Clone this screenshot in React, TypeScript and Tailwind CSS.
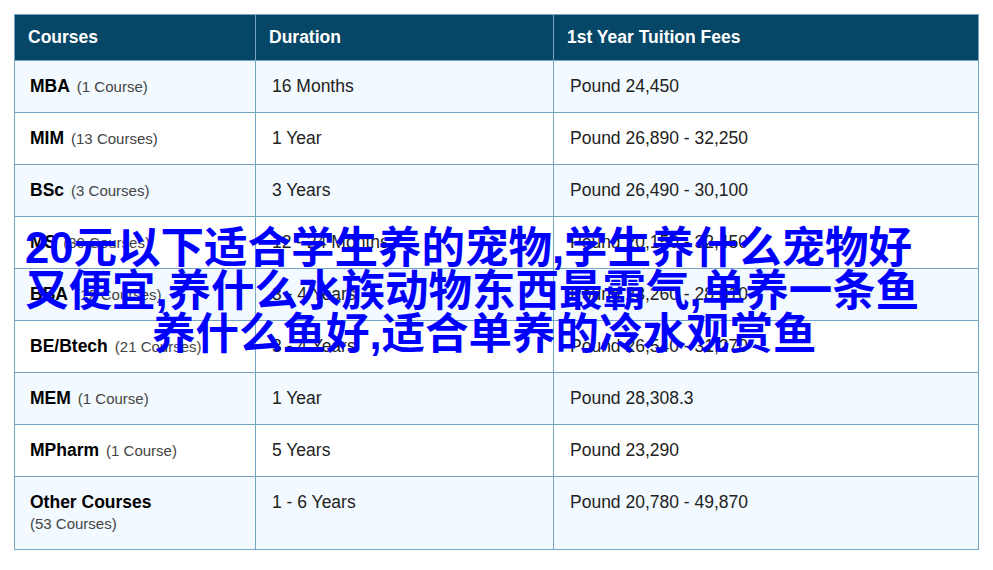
import React from 'react';

type Row = {
  name: string;
  count: string;
  duration: string;
  fees: string;
  stacked?: boolean;
};

const rows: Row[] = [
  { name: 'MBA', count: '(1 Course)', duration: '16 Months', fees: 'Pound 24,450' },
  { name: 'MIM', count: '(13 Courses)', duration: '1 Year', fees: 'Pound 26,890 - 32,250' },
  { name: 'BSc', count: '(3 Courses)', duration: '3 Years', fees: 'Pound 26,490 - 30,100' },
  { name: 'MS', count: '(30 Courses)', duration: '12 - 24 Months', fees: 'Pound 20,150 - 32,450' },
  { name: 'BBA', count: '(12 Courses)', duration: '3 - 4 Years', fees: 'Pound 23,260 - 28,810' },
  { name: 'BE/Btech', count: '(21 Courses)', duration: '3 - 4 Years', fees: 'Pound 26,540 - 31,270' },
  { name: 'MEM', count: '(1 Course)', duration: '1 Year', fees: 'Pound 28,308.3' },
  { name: 'MPharm', count: '(1 Course)', duration: '5 Years', fees: 'Pound 23,290' },
  { name: 'Other Courses', count: '(53 Courses)', duration: '1 - 6 Years', fees: 'Pound 20,780 - 49,870', stacked: true },
];

const App: React.FC = () => {
  return (
    <div className="relative h-[570px] w-[993px] overflow-hidden bg-white font-['Liberation_Sans',Arial,sans-serif]">
      <div className="pl-[14px] pt-[14px]">
        <table className="w-[965px] table-fixed border-collapse text-[17.5px] leading-[26px] text-[#222]">
          <thead>
            <tr className="h-[46px] bg-[#064666] text-left font-bold text-white">
              <th className="w-[241px] border border-[#73a5c0] pb-[2px] pl-[13px]">Courses</th>
              <th className="w-[298px] border border-[#73a5c0] pb-[2px] pl-[13px]">Duration</th>
              <th className="border border-[#73a5c0] pb-[2px] pl-[13px]">1st Year Tuition Fees</th>
            </tr>
          </thead>
          <tbody>
            {rows.map((row, i) => (
              <tr key={row.name} className={i % 2 === 0 ? 'bg-[#f2f9ff]' : 'bg-white'}>
                <td className={`border border-[#73a5c0] pl-[15px] pt-[12px] align-top ${row.stacked ? 'h-[73px]' : 'h-[52px]'}`}>
                  <b className="font-bold text-black">{row.name}</b>
                  {row.stacked ? (
                    <span className="block text-[15px] leading-[18px] text-[#444]">{row.count}</span>
                  ) : (
                    <span className="ml-[7px] text-[15px] text-[#444]">{row.count}</span>
                  )}
                </td>
                <td className="border border-[#73a5c0] pl-[16px] pt-[12px] align-top">{row.duration}</td>
                <td className="border border-[#73a5c0] pl-[16px] pt-[12px] align-top">{row.fees}</td>
              </tr>
            ))}
          </tbody>
        </table>
      </div>

      <div className="absolute left-0 top-[227px] text-[43.5px] leading-[43px] font-bold whitespace-nowrap text-[#0000ff] font-['Liberation_Sans','Noto_Sans_CJK_SC',sans-serif]">
        <span className="ml-[25px] block">20元以下适合学生养的宠物,学生养什么宠物好</span>
        <span className="ml-[25px] block">又便宜,养什么水族动物东西最霸气,单养一条鱼</span>
        <span className="ml-[152px] block">养什么鱼好,适合单养的冷水观赏鱼</span>
      </div>
    </div>
  );
};

export default App;
